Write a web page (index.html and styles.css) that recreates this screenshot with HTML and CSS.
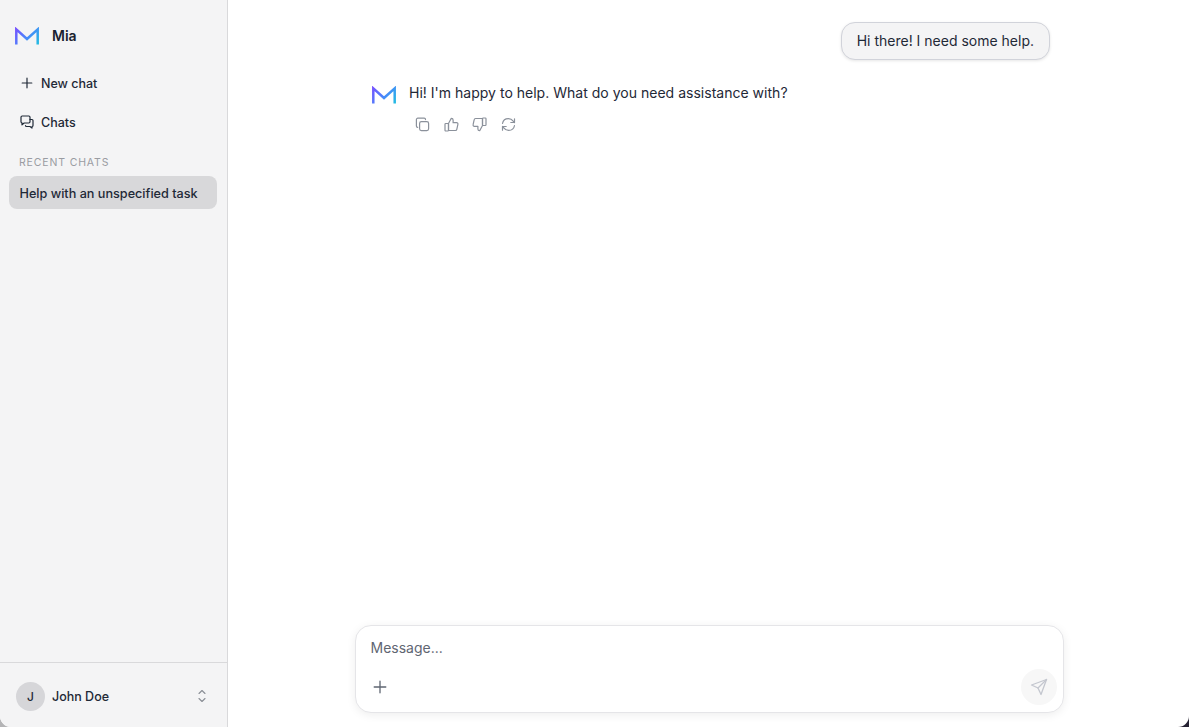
FILE: index.html
```html
<!DOCTYPE html>
<html lang="en">
<head>
<meta charset="utf-8">
<title>Mia</title>
<link rel="stylesheet" href="styles.css">
</head>
<body>
<div class="app">
  <aside class="sidebar">
    <div class="brand">
      <svg class="logo" width="24" height="18" viewBox="0 0 24 18" fill="none"><defs><linearGradient id="g1" x1="0" y1="0" x2="24" y2="18" gradientUnits="userSpaceOnUse"><stop offset="0" stop-color="#7a4dff"/><stop offset="0.5" stop-color="#4a86fb"/><stop offset="1" stop-color="#1fc0e0"/></linearGradient></defs><path d="M1.300 17.500V2.400L12 12 22.700 2.400V17.500" stroke="url(#g1)" stroke-width="2.500"/></svg>
      <span class="brand-name">Mia</span>
    </div>
    <nav class="nav">
      <div class="nav-item">
        <svg class="nav-icon" width="16" height="16" viewBox="0 0 16 16" fill="none" stroke="#1f2937" stroke-width="1.200" stroke-linecap="round"><path d="M8 3.200v9.600M3.200 8h9.600"/></svg>
        <span>New chat</span>
      </div>
      <div class="nav-item">
        <svg class="nav-icon" width="16" height="16" viewBox="0 0 16 16" fill="none" stroke="#1f2937" stroke-width="1.200" stroke-linejoin="round" stroke-linecap="round"><path d="M2 3.200c0-.7.500-1.200 1.200-1.200h6.600c.7 0 1.200.5 1.200 1.200v4.600c0 .7-.5 1.200-1.200 1.200H5.200L3 10.800V9h.2C2.500 9 2 8.500 2 7.800z"/><path d="M11 5.500h2c.6 0 1 .4 1 1v5c0 .6-.4 1-1 1v1.600L11 12.500H7.500c-.6 0-1-.4-1-1"/></svg>
        <span>Chats</span>
      </div>
    </nav>
    <div class="section-label">RECENT CHATS</div>
    <div class="chat-item">Help with an unspecified task</div>
    <div class="account">
      <span class="avatar">J</span>
      <span class="account-name">John Doe</span>
      <svg width="12" height="16" viewBox="0 0 12 16" fill="none" stroke="#8b8f96" stroke-width="1.100" stroke-linecap="round" stroke-linejoin="round"><path d="M3 5.500 6 2.500l3 3M3 10.500l3 3 3-3"/></svg>
    </div>
  </aside>
  <main class="main">
    <div class="thread">
      <div class="user-row"><div class="bubble">Hi there! I need some help.</div></div>
      <div class="reply">
        <svg class="reply-logo" width="24" height="18" viewBox="0 0 24 18" fill="none"><defs><linearGradient id="g2" x1="0" y1="0" x2="24" y2="18" gradientUnits="userSpaceOnUse"><stop offset="0" stop-color="#7a4dff"/><stop offset="0.5" stop-color="#4a86fb"/><stop offset="1" stop-color="#1fc0e0"/></linearGradient></defs><path d="M1.300 17.500V2.400L12 12 22.700 2.400V17.500" stroke="url(#g2)" stroke-width="2.500"/></svg>
        <div class="reply-body">
          <p class="reply-text">Hi! I'm happy to help. What do you need assistance with?</p>
          <div class="actions">
            <svg width="15" height="15" viewBox="0 0 15 15" fill="none" stroke="#8b919b" stroke-width="1.200" stroke-linejoin="round" stroke-linecap="round"><rect x="4.600" y="4.600" width="9" height="9" rx="1.800"/><path d="M10.500 2.600V2.500c0-.8-.6-1.300-1.300-1.300H2.800c-.8 0-1.400.6-1.400 1.400v6.400c0 .8.500 1.300 1.300 1.300"/></svg>
            <svg width="15" height="15" viewBox="0 0 15 15" fill="none" stroke="#8b919b" stroke-width="1.200" stroke-linejoin="round" stroke-linecap="round"><path d="M4.500 6.500 7.300 1.300c1 0 1.800.8 1.800 1.800v2.600h3.500c.9 0 1.500.8 1.300 1.600l-1.100 5c-.1.700-.7 1.200-1.400 1.200H4.500z"/><rect x="1" y="6.500" width="3.500" height="7.500" rx=".8"/></svg>
            <svg width="15" height="15" viewBox="0 0 15 15" fill="none" stroke="#8b919b" stroke-width="1.200" stroke-linejoin="round" stroke-linecap="round"><path d="M10.500 8.500 7.700 13.700c-1 0-1.800-.8-1.800-1.800V9.300H2.400c-.9 0-1.500-.8-1.300-1.600l1.100-5C2.300 2 2.900 1.500 3.600 1.500h6.900z"/><rect x="10.500" y="1" width="3.500" height="7.500" rx=".8"/></svg>
            <svg width="15" height="15" viewBox="0 0 15 15" fill="none" stroke="#8b919b" stroke-width="1.200" stroke-linejoin="round" stroke-linecap="round"><path d="M1.500 6.500C2 3.700 4.400 1.600 7.400 1.600c2 0 3.700 1 4.800 2.500l1.300 1.400M13.500 1.800v3.700H9.800M13.500 8.500c-.5 2.800-2.900 4.900-5.900 4.900-2 0-3.700-1-4.800-2.500L1.500 9.500M1.500 13.200V9.500h3.700"/></svg>
          </div>
        </div>
      </div>
    </div>
    <div class="composer">
      <div class="placeholder">Message...</div>
      <div class="composer-bar">
        <svg width="16" height="16" viewBox="0 0 16 16" fill="none" stroke="#5f6672" stroke-width="1.300" stroke-linecap="round"><path d="M8 2.200v11.600M2.200 8h11.600"/></svg>
        <span class="send">
          <svg width="18" height="18" viewBox="0 0 18 18" fill="none" stroke="#c4c7cf" stroke-width="1.300" stroke-linejoin="round" stroke-linecap="round"><path d="M1.500 7 16.500 1.500 11 16.500 8 10z"/><path d="M8 10 16.500 1.500"/></svg>
        </span>
      </div>
    </div>
  </main>
</div>
</body>
</html>
```
FILE: styles.css
```css
* { box-sizing: border-box; }
html, body { margin: 0; height: 100%; }
html { background: linear-gradient(90deg, #b4b4b6 0 50%, #262233 50% 100%); }
body {
  overflow: hidden;
  font-family: Inter, "Liberation Sans", sans-serif;
  color: #1f2937;
}
.app {
  display: flex;
  height: 727px;
  background: #fff;
  border-radius: 0 0 11px 11px;
  overflow: hidden;
}
.sidebar {
  width: 228px;
  flex: none;
  display: flex;
  flex-direction: column;
  background: #f4f4f5;
  border-right: 1px solid #d9d9db;
}
.brand {
  display: flex;
  align-items: center;
  gap: 13px;
  height: 18px;
  margin: 27px 0 0 15px;
}
.brand-name { font-size: 14px; line-height: 17px; font-weight: 600; color: #1a2230; margin-top: -1px; }
.nav { display: flex; flex-direction: column; gap: 7px; margin-top: 22px; padding-left: 19px; }
.nav-item {
  display: flex;
  align-items: center;
  gap: 13px;
  height: 32px;
  font-size: 12.5px;
  font-weight: 500;
}
.nav-icon { flex: none; margin-right: -7px; }
.section-label {
  margin: 18px 0 0 19px;
  font-size: 10.5px;
  line-height: 14px;
  letter-spacing: .85px;
  color: #9a9ca2;
}
.chat-item {
  margin: 6px 10px 0 9px;
  height: 33px;
  padding-left: 10.500px;
  line-height: 36px;
  border-radius: 8px;
  background: #d8d8da;
  font-size: 12.65px;
  font-weight: 500;
}
.account {
  margin-top: auto;
  height: 65px;
  display: flex;
  align-items: center;
  padding: 2px 19px 0 16px;
  border-top: 1px solid #d9d9db;
}
.avatar {
  width: 29px;
  height: 29px;
  border-radius: 50%;
  background: #d6d6d9;
  display: flex;
  align-items: center;
  justify-content: center;
  font-size: 12px;
  font-weight: 500;
}
.account-name { flex: 1; margin-left: 7px; font-size: 12.5px; font-weight: 500; }
.main {
  flex: 1;
  display: flex;
  flex-direction: column;
  align-items: center;
}
.thread { width: 678px; margin-left: 5px; flex: 1; padding-top: 22px; }
.user-row { display: flex; justify-content: flex-end; }
.bubble {
  height: 38px;
  line-height: 36px;
  padding: 0 15px;
  border: 1px solid #d1d3da;
  border-radius: 14px;
  background: #f4f4f5;
  box-shadow: 0 1px 3px rgba(0,0,0,.1);
  font-size: 14px;
}
.reply { display: flex; gap: 13px; margin-top: 25px; }
.reply-logo { flex: none; margin-top: 1px; }
.reply-text { margin: -1px 0 0; font-size: 14.040px; line-height: 18px; }
.actions { display: flex; gap: 13.700px; margin: 15px 0 0 6px; }
.composer {
  width: 709px;
  height: 88px;
  margin: 0 0 14px 2px;
  padding: 13px 14.500px 0;
  background: #fff;
  border: 1px solid #e5e5e8;
  border-radius: 16px;
  box-shadow: 0 2px 10px rgba(0,0,0,.07);
}
.placeholder { font-size: 14px; line-height: 17px; color: #5f6672; }
.composer-bar {
  display: flex;
  justify-content: space-between;
  align-items: center;
  margin: 13px -8px 0 1.500px;
  height: 36px;
}
.send {
  width: 36px;
  height: 36px;
  border-radius: 50%;
  background: #f7f7f7;
  display: flex;
  align-items: center;
  justify-content: center;
}
```
